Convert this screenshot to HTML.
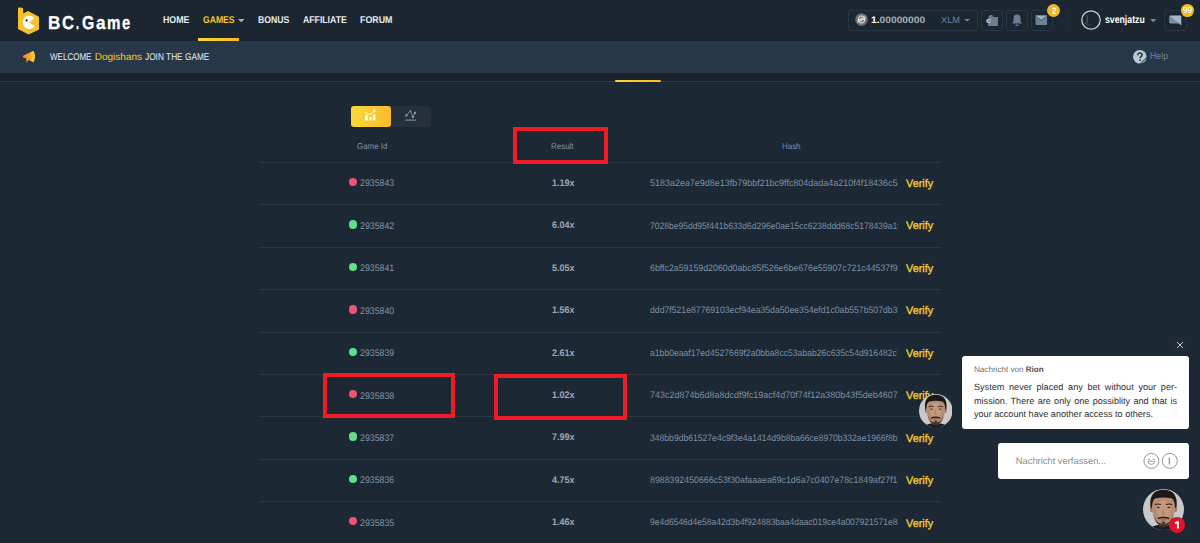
<!DOCTYPE html>
<html><head><meta charset="utf-8">
<style>
*{margin:0;padding:0;box-sizing:border-box}
html,body{width:1200px;height:543px;overflow:hidden}
body{background:#1c2833;font-family:"Liberation Sans",sans-serif;position:relative;text-rendering:geometricPrecision}
.a{position:absolute;white-space:nowrap}
.btn{position:absolute;top:10px;height:21px;border:1px solid #283543;border-radius:3px}
.badge{position:absolute;border-radius:50%;background:#f1b923}
.rl{position:absolute;left:259px;width:682px;height:1px;background:#2a3642}
.dot{position:absolute;width:8.3px;height:8.3px;border-radius:50%}
.hash{position:absolute;left:640px;width:258px;overflow:hidden;height:14px}
.rbox{position:absolute;border:4px solid #ee1c25}
</style></head><body>

<svg width="0" height="0" style="position:absolute">
<defs>
<symbol id="face" viewBox="0 0 100 100">
 <clipPath id="fc"><circle cx="50" cy="50" r="50"/></clipPath>
 <g clip-path="url(#fc)">
 <rect width="100" height="100" fill="#c8c9ca"/>
 <path d="M14 100 Q20 89 40 87 L60 87 Q80 89 86 100 Z" fill="#1c1c1e"/>
 <rect x="39" y="74" width="22" height="16" fill="#976e5a"/>
 <ellipse cx="21" cy="50" rx="4" ry="7" fill="#a87c65"/>
 <ellipse cx="79" cy="50" rx="4" ry="7" fill="#a87c65"/>
 <path d="M22 30 Q21 68 33 82 Q41 92 50 92 Q59 92 67 82 Q79 68 78 30 Q50 6 22 30Z" fill="#b88c73"/>
 <ellipse cx="50" cy="50" rx="17" ry="23" fill="#caa187" opacity="0.6"/>
 <path d="M19 48 Q13 14 34 5 Q50 -1 66 5 Q87 14 81 48 L78 44 Q78 28 70 23 Q50 18 30 23 Q22 28 22 44Z" fill="#1d1816"/>
 <path d="M29 38 Q36 35 44 38" stroke="#2a201c" stroke-width="2.6" fill="none"/>
 <path d="M56 38 Q64 35 71 38" stroke="#2a201c" stroke-width="2.6" fill="none"/>
 <ellipse cx="37" cy="45" rx="3.8" ry="1.9" fill="#3a2c26"/>
 <ellipse cx="63" cy="45" rx="3.8" ry="1.9" fill="#3a2c26"/>
 <path d="M50 48 L47 60 Q50 62 53 60" stroke="#916753" stroke-width="1.6" fill="none"/>
 <path d="M27 62 Q30 90 50 93 Q70 90 73 62 Q69 80 60 83 Q50 86 40 83 Q31 80 27 62Z" fill="#3a2b24" opacity="0.9"/>
 <path d="M35 71 Q50 63 65 71 L63 74 Q50 69 37 74Z" fill="#2c211c"/>
 <ellipse cx="50" cy="75" rx="7" ry="2.4" fill="#9c6c60"/>
 <path d="M45 80 Q50 90 55 80Z" fill="#2c211c"/>
 </g>
</symbol>
</defs></svg>

<div class="a" style="left:0;top:0;width:1200px;height:41px;background:#1b2630"></div>
<div class="a" style="left:0;top:41px;width:1200px;height:32px;background:#283747"></div>
<div class="a" style="left:0;top:73px;width:1200px;height:8px;background:#19242e"></div>
<div class="a" style="left:0;top:81px;width:1200px;height:1px;background:#2a3a4a"></div>
<div class="a" style="left:615px;top:80px;width:46px;height:2px;background:linear-gradient(90deg,#f8d83a,#fbb82a);border-radius:1px"></div>
<svg class="a" style="left:17px;top:7px" width="23" height="28" viewBox="0 0 23 28">
 <path d="M1 1.2 Q1 0.4 2 0.4 L5 0.8 Q6.2 1 6.2 2.2 L6.2 6.5 L11 4 L22 9.8 L22 22.5 L11.5 27.6 L1 22 Z" fill="#f4c32c"/>
 <path d="M11.9 8.8 A6.6 6.6 0 1 0 17.8 19.1 L12.2 15.4 L17.5 11.2 A6.6 6.6 0 0 0 11.9 8.8 Z" fill="#fff"/>
 <circle cx="9.6" cy="13.4" r="1.1" fill="#1c242d"/>
</svg>
<div class="a" style="left:48.00px;top:13.74px;font-size:18.60px;line-height:18.60px;font-weight:bold;color:#ffffff;transform:scaleX(0.926);transform-origin:0 0;-webkit-text-stroke:0.3px #fff;">B</div>
<div class="a" style="left:61.90px;top:13.74px;font-size:18.60px;line-height:18.60px;font-weight:bold;color:#ffffff;transform:scaleX(0.896);transform-origin:0 0;-webkit-text-stroke:0.3px #fff;">C</div>
<div class="a" style="left:76.10px;top:13.74px;font-size:18.60px;line-height:18.60px;font-weight:bold;color:#ffffff;transform:scaleX(0.576);transform-origin:0 0;-webkit-text-stroke:0.3px #fff;">.</div>
<div class="a" style="left:81.75px;top:13.74px;font-size:18.60px;line-height:18.60px;font-weight:bold;color:#ffffff;transform:scaleX(0.851);transform-origin:0 0;-webkit-text-stroke:0.3px #fff;">G</div>
<div class="a" style="left:96.00px;top:13.74px;font-size:18.60px;line-height:18.60px;font-weight:bold;color:#ffffff;transform:scaleX(0.928);transform-origin:0 0;-webkit-text-stroke:0.3px #fff;">a</div>
<div class="a" style="left:107.30px;top:13.74px;font-size:18.60px;line-height:18.60px;font-weight:bold;color:#ffffff;transform:scaleX(0.812);transform-origin:0 0;-webkit-text-stroke:0.3px #fff;">m</div>
<div class="a" style="left:122.30px;top:13.74px;font-size:18.60px;line-height:18.60px;font-weight:bold;color:#ffffff;transform:scaleX(0.794);transform-origin:0 0;-webkit-text-stroke:0.3px #fff;">e</div>
<div class="a" style="left:162.50px;top:16.02px;font-size:9.86px;line-height:9.86px;font-weight:bold;color:#e6ecf2;transform:scaleX(0.896);transform-origin:0 0;">HOME</div>
<div class="a" style="left:203.00px;top:16.02px;font-size:9.86px;line-height:9.86px;font-weight:bold;color:#f5c832;transform:scaleX(0.872);transform-origin:0 0;">GAMES</div>
<svg class="a" style="left:237.5px;top:19px" width="7" height="4"><path d="M0 0H6.5L3.25 3.2Z" fill="#9bb6d2"/></svg>
<div class="a" style="left:258.10px;top:16.02px;font-size:9.86px;line-height:9.86px;font-weight:bold;color:#e6ecf2;transform:scaleX(0.880);transform-origin:0 0;">BONUS</div>
<div class="a" style="left:303.10px;top:16.02px;font-size:9.86px;line-height:9.86px;font-weight:bold;color:#e6ecf2;transform:scaleX(0.883);transform-origin:0 0;">AFFILIATE</div>
<div class="a" style="left:360.00px;top:16.02px;font-size:9.86px;line-height:9.86px;font-weight:bold;color:#e6ecf2;transform:scaleX(0.900);transform-origin:0 0;">FORUM</div>
<div class="a" style="left:198px;top:38px;width:41px;height:3px;background:linear-gradient(90deg,#f8d83a,#fbb82a)"></div>
<div class="btn" style="left:848px;width:130px"></div>
<svg class="a" style="left:855px;top:13px" width="13" height="13" viewBox="0 0 13 13"><defs><radialGradient id="cg"><stop offset="0" stop-color="#8e8e8e"/><stop offset="1" stop-color="#6a6a6a"/></radialGradient></defs><circle cx="6.5" cy="6.5" r="6.3" fill="url(#cg)"/><path d="M3.6 7.2 A3 3 0 0 1 9.2 4.8 M9.4 5.8 A3 3 0 0 1 3.8 8.2 M2.5 9.2 L10.5 5.2 M2.5 7.8 L10.5 3.8" stroke="#eee" stroke-width="1" fill="none"/></svg>
<div class="a" style="left:870.80px;top:15.19px;font-size:9.42px;line-height:9.42px;font-weight:bold;color:#a3adb8;transform:scaleX(1.089);transform-origin:0 0;"><span style="color:#fff">1.</span>00000000</div>
<div class="a" style="left:941.25px;top:15.96px;font-size:8.99px;line-height:8.99px;font-weight:normal;color:#6a87a5;transform:scaleX(1.029);transform-origin:0 0;">XLM</div>
<svg class="a" style="left:964.4px;top:19.4px" width="7" height="3"><path d="M0 0H6.2L3.1 2.6Z" fill="#6a87a5"/></svg>
<div class="btn" style="left:981px;width:22px"></div>
<div class="btn" style="left:1006px;width:22px"></div>
<div class="btn" style="left:1031px;width:22px"></div>
<svg class="a" style="left:985px;top:14px" width="14" height="13" viewBox="0 0 14 13"><path d="M4 2.5 Q4.5 0.8 6 1 L9 2.3 L4 3.2Z" fill="#7d8fa2"/><rect x="3" y="3" width="10" height="9" rx="0.8" fill="#6b7d90"/><path d="M1 6.8 Q1 5 3 5 L5.5 5 L5.5 9 L3 9 Q1 9 1 6.8Z" fill="#a3b3c3"/><circle cx="4" cy="7" r="0.9" fill="#6b7d90"/></svg>
<svg class="a" style="left:1011px;top:14px" width="12" height="13" viewBox="0 0 12 13"><path d="M6 0.5 Q9.5 0.5 9.5 4.5 L9.5 7.5 L11 9.5 L1 9.5 L2.5 7.5 L2.5 4.5 Q2.5 0.5 6 0.5Z" fill="#6b7d90"/><rect x="4.6" y="10.6" width="2.8" height="1.2" fill="#7f86c6"/></svg>
<svg class="a" style="left:1035px;top:15px" width="13" height="11" viewBox="0 0 13 11"><rect x="0.5" y="0.5" width="11.5" height="9.5" rx="0.8" fill="#6c8094"/><path d="M0.5 1 L6.25 5.2 L12 1 L12 0.5 L0.5 0.5Z" fill="#a0b3c6"/><path d="M0.8 1.2 L6.25 5.3 L11.7 1.2" stroke="#3d4b5a" stroke-width="0.8" fill="none"/></svg>
<div class="badge" style="left:1047.2px;top:4.2px;width:13px;height:13px"></div>
<div class="a" style="left:1051.50px;top:6.54px;font-size:9.13px;line-height:9.13px;font-weight:bold;color:#fff;transform:scaleX(0.888);transform-origin:0 0;">2</div>
<div class="a" style="left:1067px;top:9px;width:1px;height:23px;background:#1f2a35"></div>
<svg class="a" style="left:1081px;top:10px" width="20" height="20" viewBox="0 0 20 20"><circle cx="10" cy="10" r="9.2" fill="#1a2633" stroke="#c8ccd0" stroke-width="1.3"/><path d="M6.5 5.5 L6 12 L4 14" stroke="#3f8a4a" stroke-width="0.8" fill="none"/><path d="M6 12 L6.5 15 L10 15.5" stroke="#6e3a3a" stroke-width="0.8" fill="none"/></svg>
<div class="a" style="left:1104.90px;top:14.61px;font-size:10.58px;line-height:10.58px;font-weight:bold;color:#ffffff;transform:scaleX(0.824);transform-origin:0 0;">svenjatzu</div>
<svg class="a" style="left:1150.4px;top:19px" width="7" height="4"><path d="M0 0H6.5L3.25 3.2Z" fill="#6a87a5"/></svg>
<div class="btn" style="left:1164px;width:22.5px"></div>
<svg class="a" style="left:1169px;top:15px" width="13" height="11" viewBox="0 0 13 11"><path d="M1.2 0.5 L11.5 0.5 Q12.3 0.5 12.3 1.3 L12.3 10.5 L9.8 8.2 L1.2 8.2 Q0.5 8.2 0.5 7.4 L0.5 1.3 Q0.5 0.5 1.2 0.5Z" fill="#a6b7ca"/><path d="M0.8 1 L10 8.2 L1.2 8.2 Q0.5 8.2 0.5 7.4Z" fill="#7b8da0"/></svg>
<div class="badge" style="left:1181.4px;top:3.9px;width:12.8px;height:12.8px"></div>
<div class="a" style="left:1183.20px;top:6.29px;font-size:8.84px;line-height:8.84px;font-weight:normal;color:#fff;transform:scaleX(0.938);transform-origin:0 0;">99</div>
<svg class="a" style="left:22px;top:50px" width="15" height="14" viewBox="0 0 15 14"><defs><linearGradient id="mg" x1="0" x2="1"><stop offset="0" stop-color="#f2892a"/><stop offset="0.55" stop-color="#f7a12c"/><stop offset="0.8" stop-color="#fdc734"/></linearGradient></defs><path d="M0.8 6.4 Q1 5.6 2 5.2 L11 1 Q11.6 0.9 11.9 1.5 Q14.2 6.6 11.9 11.8 Q11.6 12.4 11 12.1 L6.4 10 L5.4 12.1 Q5 12.7 4.5 12.2 L4.3 8.6 L2 7.8 Q1 7.4 0.8 6.4Z" fill="url(#mg)"/></svg>
<div class="a" style="left:49.50px;top:53.02px;font-size:9.86px;line-height:9.86px;font-weight:normal;color:#e6ecf1;transform:scaleX(0.815);transform-origin:0 0;">WELCOME</div>
<div class="a" style="left:94.75px;top:52.60px;font-size:10.00px;line-height:10.00px;font-weight:normal;color:#f1d12e;">Dogishans</div>
<div class="a" style="left:145.10px;top:53.02px;font-size:9.86px;line-height:9.86px;font-weight:normal;color:#e6ecf1;transform:scaleX(0.843);transform-origin:0 0;">JOIN THE GAME</div>
<svg class="a" style="left:1133px;top:49.7px" width="14" height="14" viewBox="0 0 14 14"><path d="M13.6 7 A6.8 6.8 0 1 0 7 13.6 L13.6 7Z" fill="#b9c9db"/><path d="M7.8 13.5 L13.5 7.8 Q13 11.8 10.5 12.8Z" fill="#8798ab"/><path d="M4.9 5.2 Q4.9 3 7 3 Q9.1 3 9.1 4.9 Q9.1 6 7.9 6.7 Q7.1 7.2 7.1 8.3" stroke="#2b3038" stroke-width="1.5" fill="none"/><rect x="6.3" y="9.4" width="1.6" height="1.6" fill="#2b3038"/></svg>
<div class="a" style="left:1149.80px;top:51.39px;font-size:9.42px;line-height:9.42px;font-weight:normal;color:#6a839e;transform:scaleX(0.930);transform-origin:0 0;">Help</div>
<div class="a" style="left:350.5px;top:106px;width:40px;height:21px;border-radius:3px;background:linear-gradient(90deg,#f9d93c,#fbbb2a)"></div>
<div class="a" style="left:390.5px;top:106px;width:40px;height:21px;border-radius:0 3px 3px 0;background:#25303b"></div>
<svg class="a" style="left:363px;top:109px" width="14" height="13" viewBox="0 0 14 13"><path d="M2 3.2 Q4.5 5.4 7 5.4 Q9 5.2 11.2 2" stroke="#fff" stroke-width="0.9" fill="none"/><circle cx="11.5" cy="1.7" r="1.1" fill="#fff"/><rect x="2" y="6.4" width="2.9" height="5" fill="#fff"/><rect x="6.2" y="8" width="2.5" height="3.4" fill="#fff"/><rect x="9.9" y="5.6" width="2.5" height="5.8" fill="#fff"/></svg>
<svg class="a" style="left:404px;top:109px" width="14" height="14" viewBox="0 0 14 14"><path d="M2.3 6.4 L6.4 1.8 L8.9 8.1 L11 3.9" stroke="#8597ab" stroke-width="0.9" fill="none"/><circle cx="2.3" cy="6.4" r="1.2" fill="#8597ab"/><circle cx="8.9" cy="8.1" r="1.2" fill="#8597ab"/><circle cx="11" cy="3.9" r="1.2" fill="#8597ab"/><circle cx="6.4" cy="1.8" r="0.7" fill="#8597ab"/><rect x="1.4" y="10.6" width="10.4" height="1" fill="#8597ab"/></svg>
<div class="a" style="left:356.60px;top:142.43px;font-size:8.55px;line-height:8.55px;font-weight:normal;color:#7d92a8;transform:scaleX(0.927);transform-origin:0 0;">Game Id</div>
<div class="a" style="left:551.00px;top:142.43px;font-size:8.55px;line-height:8.55px;font-weight:normal;color:#7d92a8;transform:scaleX(0.932);transform-origin:0 0;">Result</div>
<div class="a" style="left:781.50px;top:142.41px;font-size:8.41px;line-height:8.41px;font-weight:normal;color:#7d92a8;transform:scaleX(0.943);transform-origin:0 0;">Hash</div>
<div class="rl" style="top:162px"></div>
<div class="dot" style="left:349.2px;top:178.10px;background:#ef5472"></div>
<div class="a" style="left:359.90px;top:179.43px;font-size:9.50px;line-height:9.50px;font-weight:normal;color:#7f93a8;transform:scaleX(0.924);transform-origin:0 0;">2935843</div>
<div class="a" style="left:551.50px;top:178.73px;font-size:9.50px;line-height:9.50px;font-weight:bold;color:#9ba8b6;transform:scaleX(0.945);transform-origin:0 0;">1.19x</div>
<div class="a" style="left:0;top:0;width:898px;height:543px;overflow:hidden;clip-path:inset(0 0 0 640px)"><div class="a" style="left:650.00px;top:179.30px;font-size:9.30px;line-height:9.30px;font-weight:normal;color:#7b90a6;transform:scaleX(0.964);transform-origin:0 0;">5183a2ea7e9d8e13fb79bbf21bc9ffc804dada4a210f4f18436c5d3e</div></div>
<div class="a" style="left:905.70px;top:178.75px;font-size:11.00px;line-height:11.00px;font-weight:normal;color:#f2cc2e;transform:scaleX(0.985);transform-origin:0 0;-webkit-text-stroke:0.35px #f2cc2e;">Verify</div>
<div class="rl" style="top:204.375px"></div>
<div class="dot" style="left:349.2px;top:220.47px;background:#5fe08c"></div>
<div class="a" style="left:359.90px;top:221.85px;font-size:9.50px;line-height:9.50px;font-weight:normal;color:#7f93a8;transform:scaleX(0.924);transform-origin:0 0;">2935842</div>
<div class="a" style="left:551.50px;top:221.17px;font-size:9.50px;line-height:9.50px;font-weight:bold;color:#9ba8b6;transform:scaleX(0.945);transform-origin:0 0;">6.04x</div>
<div class="a" style="left:0;top:0;width:898px;height:543px;overflow:hidden;clip-path:inset(0 0 0 640px)"><div class="a" style="left:650.00px;top:221.67px;font-size:9.30px;line-height:9.30px;font-weight:normal;color:#7b90a6;transform:scaleX(0.916);transform-origin:0 0;">7028be95dd95f441b633d6d296e0ae15cc6238ddd68c5178439a1f2</div></div>
<div class="a" style="left:905.70px;top:221.23px;font-size:11.00px;line-height:11.00px;font-weight:normal;color:#f2cc2e;transform:scaleX(0.985);transform-origin:0 0;-webkit-text-stroke:0.35px #f2cc2e;">Verify</div>
<div class="rl" style="top:246.750px"></div>
<div class="dot" style="left:349.2px;top:262.85px;background:#5fe08c"></div>
<div class="a" style="left:359.90px;top:264.28px;font-size:9.50px;line-height:9.50px;font-weight:normal;color:#7f93a8;transform:scaleX(0.924);transform-origin:0 0;">2935841</div>
<div class="a" style="left:551.50px;top:263.62px;font-size:9.50px;line-height:9.50px;font-weight:bold;color:#9ba8b6;transform:scaleX(0.945);transform-origin:0 0;">5.05x</div>
<div class="a" style="left:0;top:0;width:898px;height:543px;overflow:hidden;clip-path:inset(0 0 0 640px)"><div class="a" style="left:650.00px;top:264.05px;font-size:9.30px;line-height:9.30px;font-weight:normal;color:#7b90a6;transform:scaleX(0.947);transform-origin:0 0;">6bffc2a59159d2060d0abc85f526e6be676e55907c721c44537f9e2</div></div>
<div class="a" style="left:905.70px;top:263.70px;font-size:11.00px;line-height:11.00px;font-weight:normal;color:#f2cc2e;transform:scaleX(0.985);transform-origin:0 0;-webkit-text-stroke:0.35px #f2cc2e;">Verify</div>
<div class="rl" style="top:289.125px"></div>
<div class="dot" style="left:349.2px;top:305.23px;background:#ef5472"></div>
<div class="a" style="left:359.90px;top:306.70px;font-size:9.50px;line-height:9.50px;font-weight:normal;color:#7f93a8;transform:scaleX(0.924);transform-origin:0 0;">2935840</div>
<div class="a" style="left:551.50px;top:306.06px;font-size:9.50px;line-height:9.50px;font-weight:bold;color:#9ba8b6;transform:scaleX(0.945);transform-origin:0 0;">1.56x</div>
<div class="a" style="left:0;top:0;width:898px;height:543px;overflow:hidden;clip-path:inset(0 0 0 640px)"><div class="a" style="left:650.00px;top:306.42px;font-size:9.30px;line-height:9.30px;font-weight:normal;color:#7b90a6;transform:scaleX(0.933);transform-origin:0 0;">ddd7f521e87769103ecf94ea35da50ee354efd1c0ab557b507db3a1</div></div>
<div class="a" style="left:905.70px;top:306.17px;font-size:11.00px;line-height:11.00px;font-weight:normal;color:#f2cc2e;transform:scaleX(0.985);transform-origin:0 0;-webkit-text-stroke:0.35px #f2cc2e;">Verify</div>
<div class="rl" style="top:331.500px"></div>
<div class="dot" style="left:349.2px;top:347.60px;background:#5fe08c"></div>
<div class="a" style="left:359.90px;top:349.12px;font-size:9.50px;line-height:9.50px;font-weight:normal;color:#7f93a8;transform:scaleX(0.924);transform-origin:0 0;">2935839</div>
<div class="a" style="left:551.50px;top:348.51px;font-size:9.50px;line-height:9.50px;font-weight:bold;color:#9ba8b6;transform:scaleX(0.945);transform-origin:0 0;">2.61x</div>
<div class="a" style="left:0;top:0;width:898px;height:543px;overflow:hidden;clip-path:inset(0 0 0 640px)"><div class="a" style="left:650.00px;top:348.80px;font-size:9.30px;line-height:9.30px;font-weight:normal;color:#7b90a6;transform:scaleX(0.927);transform-origin:0 0;">a1bb0eaaf17ed4527669f2a0bba8cc53abab26c635c54d916482c7e</div></div>
<div class="a" style="left:905.70px;top:348.65px;font-size:11.00px;line-height:11.00px;font-weight:normal;color:#f2cc2e;transform:scaleX(0.985);transform-origin:0 0;-webkit-text-stroke:0.35px #f2cc2e;">Verify</div>
<div class="rl" style="top:373.875px"></div>
<div class="dot" style="left:349.2px;top:389.98px;background:#ef5472"></div>
<div class="a" style="left:359.90px;top:391.55px;font-size:9.50px;line-height:9.50px;font-weight:normal;color:#7f93a8;transform:scaleX(0.924);transform-origin:0 0;">2935838</div>
<div class="a" style="left:551.50px;top:390.95px;font-size:9.50px;line-height:9.50px;font-weight:bold;color:#9ba8b6;transform:scaleX(0.945);transform-origin:0 0;">1.02x</div>
<div class="a" style="left:0;top:0;width:898px;height:543px;overflow:hidden;clip-path:inset(0 0 0 640px)"><div class="a" style="left:650.00px;top:391.17px;font-size:9.30px;line-height:9.30px;font-weight:normal;color:#7b90a6;transform:scaleX(0.966);transform-origin:0 0;">743c2d874b6d8a8dcdf9fc19acf4d70f74f12a380b43f5deb4607d1</div></div>
<div class="a" style="left:905.70px;top:391.12px;font-size:11.00px;line-height:11.00px;font-weight:normal;color:#f2cc2e;transform:scaleX(0.985);transform-origin:0 0;-webkit-text-stroke:0.35px #f2cc2e;">Verify</div>
<div class="rl" style="top:416.250px"></div>
<div class="dot" style="left:349.2px;top:432.35px;background:#5fe08c"></div>
<div class="a" style="left:359.90px;top:433.98px;font-size:9.50px;line-height:9.50px;font-weight:normal;color:#7f93a8;transform:scaleX(0.924);transform-origin:0 0;">2935837</div>
<div class="a" style="left:551.50px;top:433.40px;font-size:9.50px;line-height:9.50px;font-weight:bold;color:#9ba8b6;transform:scaleX(0.945);transform-origin:0 0;">7.99x</div>
<div class="a" style="left:0;top:0;width:898px;height:543px;overflow:hidden;clip-path:inset(0 0 0 640px)"><div class="a" style="left:650.00px;top:433.55px;font-size:9.30px;line-height:9.30px;font-weight:normal;color:#7b90a6;transform:scaleX(0.924);transform-origin:0 0;">348bb9db61527e4c9f3e4a1414d9b8ba66ce8970b332ae1966f8b2c</div></div>
<div class="a" style="left:905.70px;top:433.60px;font-size:11.00px;line-height:11.00px;font-weight:normal;color:#f2cc2e;transform:scaleX(0.985);transform-origin:0 0;-webkit-text-stroke:0.35px #f2cc2e;">Verify</div>
<div class="rl" style="top:458.625px"></div>
<div class="dot" style="left:349.2px;top:474.73px;background:#5fe08c"></div>
<div class="a" style="left:359.90px;top:476.40px;font-size:9.50px;line-height:9.50px;font-weight:normal;color:#7f93a8;transform:scaleX(0.924);transform-origin:0 0;">2935836</div>
<div class="a" style="left:551.50px;top:475.84px;font-size:9.50px;line-height:9.50px;font-weight:bold;color:#9ba8b6;transform:scaleX(0.945);transform-origin:0 0;">4.75x</div>
<div class="a" style="left:0;top:0;width:898px;height:543px;overflow:hidden;clip-path:inset(0 0 0 640px)"><div class="a" style="left:650.00px;top:475.92px;font-size:9.30px;line-height:9.30px;font-weight:normal;color:#7b90a6;transform:scaleX(0.946);transform-origin:0 0;">8988392450666c53f30afaaaea69c1d6a7c0407e78c1849af27f1a3</div></div>
<div class="a" style="left:905.70px;top:476.07px;font-size:11.00px;line-height:11.00px;font-weight:normal;color:#f2cc2e;transform:scaleX(0.985);transform-origin:0 0;-webkit-text-stroke:0.35px #f2cc2e;">Verify</div>
<div class="rl" style="top:501.000px"></div>
<div class="dot" style="left:349.2px;top:517.10px;background:#ef5472"></div>
<div class="a" style="left:359.90px;top:518.82px;font-size:9.50px;line-height:9.50px;font-weight:normal;color:#7f93a8;transform:scaleX(0.924);transform-origin:0 0;">2935835</div>
<div class="a" style="left:551.50px;top:518.28px;font-size:9.50px;line-height:9.50px;font-weight:bold;color:#9ba8b6;transform:scaleX(0.945);transform-origin:0 0;">1.46x</div>
<div class="a" style="left:0;top:0;width:898px;height:543px;overflow:hidden;clip-path:inset(0 0 0 640px)"><div class="a" style="left:650.00px;top:518.29px;font-size:9.30px;line-height:9.30px;font-weight:normal;color:#7b90a6;transform:scaleX(0.915);transform-origin:0 0;">9e4d6546d4e58a42d3b4f924883baa4daac019ce4a007921571e8d2</div></div>
<div class="a" style="left:905.70px;top:518.55px;font-size:11.00px;line-height:11.00px;font-weight:normal;color:#f2cc2e;transform:scaleX(0.985);transform-origin:0 0;-webkit-text-stroke:0.35px #f2cc2e;">Verify</div>
<div class="rbox" style="left:513px;top:127px;width:95px;height:37px"></div>
<div class="rbox" style="left:323px;top:373px;width:132px;height:45px"></div>
<div class="rbox" style="left:494px;top:374px;width:133px;height:46px"></div>
<div class="a" style="left:1171px;top:336px;width:18px;height:18px;border-radius:50%;background:#202a33"></div>
<svg class="a" style="left:1176px;top:341px" width="8" height="8" viewBox="0 0 8 8"><path d="M1 1L7 7M7 1L1 7" stroke="#c5cad0" stroke-width="1"/></svg>
<div class="a" style="left:962px;top:356px;width:227px;height:73px;background:#fff;border-radius:3px"></div>
<div class="a" style="left:974px;top:364.5px;font-size:8.1px;line-height:10px;color:#707070">Nachricht von <b style="color:#505050">Rion</b></div>
<div class="a" style="left:974px;top:381px;width:203px;text-align:justify;text-align-last:justify;font-size:9.1px;line-height:12px;color:#2e2e2e;">System never placed any bet without your per-</div>
<div class="a" style="left:974px;top:394.5px;width:203px;text-align:justify;text-align-last:justify;font-size:9.1px;line-height:12px;color:#2e2e2e;">mission. There are only one possiblity and that is</div>
<div class="a" style="left:974px;top:408px;font-size:9.1px;line-height:12px;color:#2e2e2e;">your account have another access to others.</div>
<svg class="a" style="left:918.5px;top:393.5px" width="33.5" height="33.5"><use href="#face"/></svg>
<div class="a" style="left:998px;top:443px;width:191px;height:36px;background:#fff;border-radius:3px"></div>
<div class="a" style="left:1015.8px;top:455px;font-size:9.36px;line-height:12px;color:#8c8c8c">Nachricht verfassen...</div>
<svg class="a" style="left:1142px;top:451px" width="38" height="20" viewBox="0 0 38 20"><g fill="none" stroke="#959595" stroke-width="1"><circle cx="9.4" cy="9.9" r="7.5"/><circle cx="27.8" cy="9.9" r="7.5"/><path d="M6 8.5H7.8M11 8.5H12.8" stroke-width="0.9"/><path d="M27.3 6.8V13.5" stroke="#808080" stroke-width="1.1"/></g><path d="M6 10.2 H12.9 Q12.7 13.4 9.45 13.4 Q6.2 13.4 6 10.2Z" fill="none" stroke="#959595" stroke-width="0.9"/></svg>
<svg class="a" style="left:1143px;top:489px" width="41" height="41"><use href="#face"/></svg>
<div class="a" style="left:1169px;top:517px;width:16px;height:16px;border-radius:50%;background:#e0112b"></div>
<svg class="a" style="left:1169px;top:517px" width="16" height="16" viewBox="0 0 16 16"><path d="M8.9 4.6 L8.9 11.6 M6.2 6.4 L8.9 4.6" stroke="#fff" stroke-width="1.9" stroke-linecap="butt" fill="none"/></svg>
</body></html>
